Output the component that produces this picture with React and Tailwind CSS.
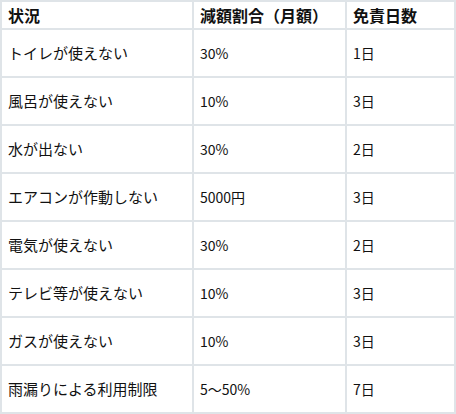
const rows = [
  ["トイレが使えない", "30%", "1日"],
  ["風呂が使えない", "10%", "3日"],
  ["水が出ない", "30%", "2日"],
  ["エアコンが作動しない", "5000円", "3日"],
  ["電気が使えない", "30%", "2日"],
  ["テレビ等が使えない", "10%", "3日"],
  ["ガスが使えない", "10%", "3日"],
  ["雨漏りによる利用制限", "5〜50%", "7日"],
]

const cell = "bg-white flex items-center pl-[6px]"

export default function App() {
  return (
    <div
      className="w-[456px] h-[414px] bg-[#dfe4e8] p-[2px] grid grid-cols-[190px_151px_107px] grid-rows-[26px_repeat(8,46px)] gap-[2px] text-[#111]"
      style={{ fontFamily: '"Noto Sans CJK JP", "Noto Sans", sans-serif' }}
    >
      <div className={`${cell} text-[16px] font-bold`}>状況</div>
      <div className={`${cell} text-[16px] font-bold`}>減額割合（月額）</div>
      <div className={`${cell} text-[16px] font-bold`}>免責日数</div>
      {rows.map((r) => (
        <>
          <div key={r[0] + "a"} className={`${cell} text-[15px]`}>{r[0]}</div>
          <div key={r[0] + "b"} className={`${cell} text-[14px]`}>{r[1]}</div>
          <div key={r[0] + "c"} className={`${cell} text-[14px]`}>{r[2]}</div>
        </>
      ))}
    </div>
  )
}
